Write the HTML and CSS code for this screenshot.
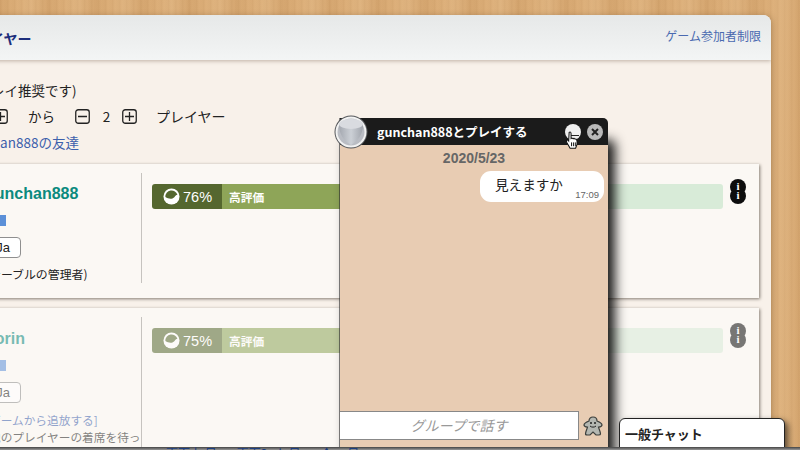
FILE: index.html
```html
<!DOCTYPE html>
<html lang="ja">
<head>
    <meta charset="UTF-8">
    <title>gunchan888とプレイする</title>
    <link rel="stylesheet" href="styles.css">
</head>
<body>
    <div class="panel">
        <div class="panel-head">
            <div class="panel-title">プレイヤー</div>
            <a class="panel-link">ゲーム参加者制限</a>
        </div>
        <div class="panel-body">
            <div class="line hint">(2人プレイ推奨です)</div>
            <div class="line range">
                <svg class="stepper first" viewBox="0 0 15 15"><rect x=".75" y=".75" width="13.5" height="13.5" rx="2.5"/><path d="M3 7.5h9"/></svg>
                <span class="num">2</span>
                <svg class="stepper" viewBox="0 0 15 15"><rect x=".75" y=".75" width="13.5" height="13.5" rx="2.5"/><path d="M3 7.5h9M7.5 3v9"/></svg>
                <span class="range-from">から</span>
                <svg class="stepper" viewBox="0 0 15 15"><rect x=".75" y=".75" width="13.5" height="13.5" rx="2.5"/><path d="M3 7.5h9"/></svg>
                <span class="num">2</span>
                <svg class="stepper" viewBox="0 0 15 15"><rect x=".75" y=".75" width="13.5" height="13.5" rx="2.5"/><path d="M3 7.5h9M7.5 3v9"/></svg>
                <span class="range-unit">プレイヤー</span>
            </div>
            <a class="line friends">gunchan888の友達</a>

            <div class="card">
                <div class="card-left">
                    <div class="name">gunchan888</div>
                    <div class="flag"></div>
                    <div class="lang">Ja</div>
                    <div class="note">(テーブルの管理者)</div>
                </div>
                <div class="card-right">
                    <div class="rating">
                        <div class="rating-score">
                            <svg class="yin" viewBox="0 0 18 18"><circle cx="9" cy="9" r="8.5" fill="#fff"/><path d="M2.5 9.5A6.5 6.5 0 0 1 15.3 7.5C13 7 13 10 10 11 7.5 11.8 5 11 2.5 9.5z" fill="#55672f"/></svg>
                            <span>76%</span>
                        </div>
                        <div class="rating-label" style="width: 64%">高評価</div>
                        <div class="rating-rest"></div>
                    </div>
                    <div class="info">
                        <div class="info-dot">i</div>
                        <div class="info-dot">i</div>
                    </div>
                </div>
            </div>

            <div class="card faded">
                <div class="card-left">
                    <div class="name">norin</div>
                    <div class="flag"></div>
                    <div class="lang">Ja</div>
                    <a class="kick">[ゲームから追放する]</a>
                    <div class="note">(他のプレイヤーの着席を待っています)</div>
                </div>
                <div class="card-right">
                    <div class="rating">
                        <div class="rating-score">
                            <svg class="yin" viewBox="0 0 18 18"><circle cx="9" cy="9" r="8.5" fill="#fff"/><path d="M2.5 9.5A6.5 6.5 0 0 1 15.3 7.5C13 7 13 10 10 11 7.5 11.8 5 11 2.5 9.5z" fill="#55672f"/></svg>
                            <span>75%</span>
                        </div>
                        <div class="rating-label" style="width: 63%">高評価</div>
                        <div class="rating-rest"></div>
                    </div>
                    <div class="info">
                        <div class="info-dot">i</div>
                        <div class="info-dot">i</div>
                    </div>
                </div>
            </div>
        </div>
    </div>

    <div class="chat">
        <div class="chat-head">
            <span class="chat-title">gunchan888とプレイする</span>
            <span class="chat-min"></span>
            <span class="chat-close">
                <svg viewBox="0 0 10 10"><path d="M2 2l6 6M8 2l-6 6" stroke="#222" stroke-width="2"/></svg>
            </span>
        </div>
        <div class="chat-body">
            <div class="chat-date">2020/5/23</div>
            <div class="bubble">
                <span>見えますか</span>
                <span class="bubble-time">17:09</span>
            </div>
            <div class="chat-foot">
                <div class="chat-input">グループで話す</div>
                <svg class="meeple" viewBox="0 0 20 20">
                    <path d="M10 1c2.5 0 4 1.700 4 4 2 .8 5 2 5 4 0 1.500-2 2-3.500 2.200.5 2 2 4.500 2 6.800 0 1-1 1-2 1h-2.500L10 16l-3 3H4.500c-1 0-2 0-2-1 0-2.300 1.500-4.800 2-6.800C3 11 1 10.500 1 9c0-2 3-3.200 5-4 0-2.300 1.500-4 4-4z" fill="#b4b7b1" stroke="#3c3f3c" stroke-width="1.2"/>
                    <circle cx="8" cy="7" r="1" fill="#222"/><circle cx="12" cy="7" r="1" fill="#222"/>
                    <path d="M7 10c1.500 1.500 4.500 1.500 6 0" fill="none" stroke="#222"/>
                </svg>
            </div>
        </div>
    </div>

    <svg class="avatar" viewBox="0 0 34 34">
        <defs>
            <linearGradient id="shield" x1="0" y1="0" x2="1" y2="0">
                <stop offset="0" stop-color="#a4a8b0"/>
                <stop offset=".5" stop-color="#ccd0d6"/>
                <stop offset="1" stop-color="#a0a4ac"/>
            </linearGradient>
        </defs>
        <circle cx="17" cy="17" r="16.5" fill="#55575a"/>
        <circle cx="17" cy="17" r="15.5" fill="#f2f2f2"/>
        <circle cx="17" cy="17" r="13.5" fill="#b9bcc3"/>
        <path d="M5 10c3-5 21-5 24 0 0 9-5 16-12 20C10 26 5 19 5 10z" fill="url(#shield)"/>
        <ellipse cx="17" cy="9" rx="12" ry="5" fill="#d9dbe0"/>
    </svg>

    <svg class="cursor" viewBox="0 0 14 20">
        <path d="M4 1.500c1-.8 2-.3 2 1V8l1-.5 1 .5 1.200-.2 1 .7 1.300.2.800 1.500v4l-1.500 4H5L1.500 12 1 10c.5-1 1.500-.8 2.500.5z" fill="#fff" stroke="#111" stroke-width="1.1"/>
        <path d="M6.500 12v4M8.500 12v4M10.500 12v4" stroke="#111"/>
    </svg>

    <div class="general-chat">一般チャット</div>

    <div class="below">
        <a>画面上 日</a>
        <a>画面3mb 日</a>
        <a>▲ー 日</a>
    </div>
</body>
</html>
```

FILE: styles.css
```css
*{
    margin: 0px;
    padding: 0px;
    box-sizing: border-box;
}
html, body{
    width: 800px;
    height: 450px;
    overflow: hidden;
}
body{
    position: relative;
    font-family: "Noto Sans CJK JP", "Liberation Sans", sans-serif;
    font-size: 13.5px;
    color: #222;
    padding-top: 15px;
    background-color: #dcae78;
    background-image:
        repeating-linear-gradient(90deg, rgba(150,95,40,.10) 0px, rgba(150,95,40,0) 14px, rgba(255,235,200,.10) 31px, rgba(150,95,40,.08) 47px),
        repeating-linear-gradient(90deg, rgba(120,70,20,.07) 0px, rgba(120,70,20,0) 3px, rgba(120,70,20,.04) 7px);
}

.panel{
    width: 971px;
    height: 432px;
    margin-left: -200px;
    border-radius: 8px 8px 0px 0px;
    background: #f8f1ea;
    box-shadow: 1px 1px 6px rgba(90,60,30,.35);
    overflow: hidden;
}
.panel-head{
    height: 45px;
    display: flex;
    justify-content: space-between;
    align-items: center;
    padding: 0px 10px 0px 162px;
    background: linear-gradient(#e6e8e8, #f3f5f5);
    box-shadow: 0px 1px 4px rgba(120,100,80,.45);
}
.panel-title{
    font-size: 14px;
    font-weight: bold;
    color: #1d2f7c;
}
.panel-link{
    font-size: 12px;
    color: #4a6ab0;
    margin-top: -5px;
}
.panel-body{
    padding: 20px 12px 0px 140px;
}
.line{
    display: block;
    height: 26px;
    line-height: 20px;
}
.hint{
    margin-left: 12px;
}
.range{
    display: flex;
    align-items: flex-start;
}
.stepper{
    width: 15px;
    height: 15px;
    margin-top: 3px;
    flex: none;
}
.stepper rect, .stepper path{
    fill: none;
    stroke: #222;
    stroke-width: 1.3;
}
.first{
    margin-left: 6px;
}
.num{
    width: 17px;
    text-align: center;
    margin-left: 8px;
    margin-right: 7px;
}
.range-from{
    margin: 0px 20px;
}
.range-unit{
    margin-left: 19px;
    font-size: 14px;
}
.friends{
    color: #3c60ac;
    height: 33px;
    margin-left: 21px;
    margin-bottom: -1px;
}

.card{
    display: flex;
    height: 134px;
    margin: 0px 0px 10px -140px;
    padding: 9px 0px 15px;
    background: #fbf8f4;
    box-shadow: 1px 1px 3px rgba(70,60,50,.65);
}
.card-left{
    flex: 0 0 342px;
    padding-left: 185px;
    border-right: 1px solid #c6c3bf;
    overflow: hidden;
}
.name{
    font-size: 16px;
    font-weight: bold;
    color: #0b8a7e;
    font-family: "Liberation Sans", sans-serif;
    line-height: 20px;
    margin-top: 11px;
}
.flag{
    width: 16px;
    height: 11px;
    margin: 11px 0px 0px 5px;
    background: #5c90d8;
}
.lang{
    width: 36px;
    height: 21px;
    margin-top: 11px;
    border: 1px solid #8f8f8f;
    border-radius: 4px;
    background: #fff;
    font-size: 13px;
    line-height: 19px;
    text-align: right;
    padding-right: 10px;
    font-family: "Liberation Sans", sans-serif;
}
.note{
    font-size: 11.9px;
    line-height: 18px;
    margin-top: 7px;
}
.kick{
    display: block;
    font-size: 11.7px;
    color: #3c60ac;
    line-height: 17px;
    margin-top: 8px;
}
.card-right{
    flex: 1;
    display: flex;
    padding: 11px 13px 0px 10px;
}
.rating{
    flex: 1;
    height: 25px;
    display: flex;
    border-radius: 3px;
    overflow: hidden;
}
.rating-score{
    flex: 0 0 70px;
    display: flex;
    align-items: center;
    gap: 3px;
    padding-left: 11px;
    background: #55672f;
    color: #fff;
    font-size: 14.5px;
    font-family: "Liberation Sans", sans-serif;
}
.yin{
    width: 17px;
    height: 17px;
}
.rating-label{
    padding: 4px 0px 0px 7px;
    background: #8ea558;
    color: #fff;
    font-size: 11.7px;
    line-height: 18px;
    font-weight: bold;
}
.rating-rest{
    flex: 1;
    background: #d8ebd8;
}
.info{
    flex: none;
    width: 16px;
    height: 25px;
    margin-left: 7px;
    margin-top: -5px;
    isolation: isolate;
}
.info-dot{
    position: relative;
    height: 9px;
    top: 3px;
    color: #fff;
    font-family: "Liberation Serif", serif;
    font-size: 11px;
    font-weight: bold;
    line-height: 9px;
    text-align: center;
}
.info-dot::before{
    content: "";
    position: absolute;
    left: 0px;
    top: -3px;
    width: 16px;
    height: 16px;
    border-radius: 50%;
    background: #0d0d0d;
    z-index: -1;
}
.faded{
    height: 140px;
    padding-bottom: 0px;
}
.faded .name{
    margin-top: 12px;
}
.faded .note{
    margin-top: 0px;
    font-size: 11.7px;
}
.faded .name, .faded .flag, .faded .lang, .faded .note,
.faded .kick, .faded .rating, .faded .info{
    opacity: .55;
}

/* ventana de chat */
.chat{
    position: absolute;
    left: 340px;
    top: 118px;
    width: 268px;
    height: 329px;
    display: flex;
    flex-direction: column;
    box-shadow: 7px 22px 12px rgba(0,0,0,.9), -1px 0px 0px rgba(50,50,50,.6);
    border-radius: 0px 5px 0px 0px;
}
.chat-head{
    height: 27px;
    display: flex;
    align-items: center;
    padding: 0px 5px 0px 37px;
    background: #1b1b1b;
    border-radius: 0px 5px 0px 0px;
}
.chat-title{
    flex: 1;
    color: #fff;
    font-size: 12.5px;
    font-weight: bold;
}
.chat-min{
    position: relative;
    width: 16px;
    height: 16px;
    margin-right: 6px;
    border-radius: 50%;
    background: #efefef;
}
.chat-min::after{
    content: "";
    position: absolute;
    left: 4px;
    top: 11px;
    width: 10px;
    height: 1px;
    background: #222;
}
.chat-close{
    width: 16px;
    height: 16px;
    padding: 3px;
    border-radius: 50%;
    background: #b9b9b9;
    display: flex;
}
.chat-body{
    flex: 1;
    display: flex;
    flex-direction: column;
    background: #e8ccb3;
}
.chat-date{
    font-family: "Liberation Sans", sans-serif;
    font-size: 14px;
    font-weight: bold;
    line-height: 15px;
    margin-top: 6px;
    text-align: center;
    color: #666;
}
.bubble{
    align-self: flex-end;
    width: 124px;
    height: 31px;
    margin: 5px 4px 0px 0px;
    padding: 3px 0px 0px 15px;
    position: relative;
    border-radius: 11px;
    background: #fff;
    font-size: 13.6px;
}
.bubble-time{
    position: absolute;
    right: 5px;
    bottom: 2px;
    font-family: "Liberation Sans", sans-serif;
    font-size: 9.5px;
    color: #666;
}
.chat-foot{
    display: flex;
    align-items: center;
    gap: 4px;
    margin-top: auto;
    margin-bottom: 7px;
}
.chat-input{
    width: 239px;
    height: 29px;
    border: 1px solid #888;
    border-left: none;
    background: #fff;
    color: #999;
    font-size: 14px;
    font-style: italic;
    line-height: 26px;
    text-align: center;
}
.meeple{
    width: 20px;
    height: 20px;
}
.avatar{
    position: absolute;
    left: 334px;
    top: 115px;
    width: 34px;
    height: 34px;
}
.cursor{
    position: absolute;
    left: 565px;
    top: 131px;
    width: 14px;
    height: 19px;
}
.general-chat{
    position: absolute;
    left: 619px;
    top: 418px;
    width: 166px;
    height: 32px;
    padding: 5px 0px 0px 5px;
    border: 1px solid #222;
    border-radius: 6px 6px 0px 0px;
    background: #fff;
    box-shadow: 3px 3px 6px rgba(0,0,0,.6);
    font-size: 13px;
    font-weight: bold;
}
.below{
    position: absolute;
    left: 0px;
    top: 447px;
    width: 800px;
    height: 3px;
    padding-left: 166px;
    display: flex;
    gap: 20px;
    overflow: hidden;
    background: linear-gradient(#444, #999);
    color: #1d3f80;
    font-size: 12px;
    line-height: 12px;
}
```
